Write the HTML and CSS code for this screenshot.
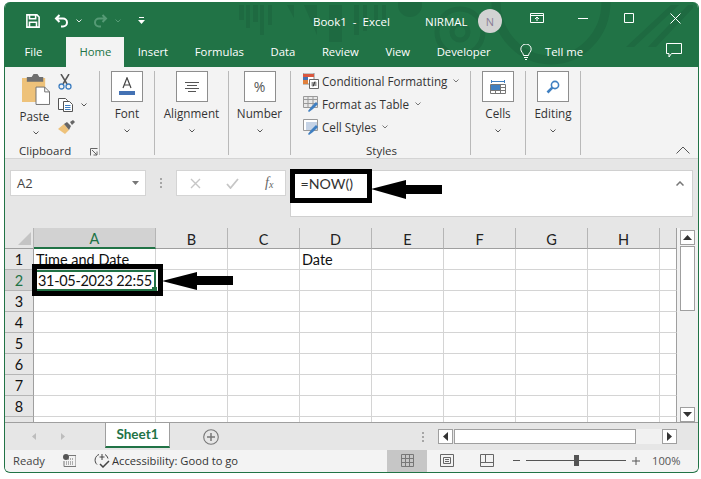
FILE: index.html
```html
<!DOCTYPE html>
<html lang="en">
<head>
<meta charset="utf-8">
<title>Book1 - Excel</title>
<link rel="stylesheet" href="styles.css">
</head>
<body>
<div class="window">
  <div class="head">
  <header class="titlebar">
    <svg class="pattern" width="460" height="65" viewBox="0 0 460 65" fill="#1e6a41">
      <path d="M6 3h5v15H6zM13 3h4v23h-4zM20 3h5v17h-5zM27 3h4v30h-4zM35 3h4v20h-4z"/>
      <path d="M54 3h7v13z"/>
      <path d="M71 3l13 30V3zM96 3h13v37H96zM121 3h5v30h-5zM130 3h4v26h-4z"/>
      <circle cx="177" cy="3" r="12"/>
      <path d="M141 3h4v20h-4zM149 3h4v14h-4z"/>
      <circle cx="227" cy="30" r="23" fill="none" stroke="#1e6a41" stroke-width="5"/>
      <circle cx="227" cy="30" r="8" fill="none" stroke="#1e6a41" stroke-width="5"/>
      <path d="M263 0a55 58 0 0 0 110 0" fill="none" stroke="#1e6a41" stroke-width="9"/>
      <path d="M393 45l45-42h8l-45 42zM415 45l40-42h5v3l-37 39z"/>
    </svg>
    <div class="qat">
      <svg class="ic-save" width="14" height="14" viewBox="0 0 16 16" fill="none" stroke="#fff" stroke-width="1.800"><path d="M1 1h11.500L15 3.500V15H1z"/><path d="M4 1v4.500h7V1M4 15V9.500h8V15" /></svg>
      <svg class="ic-undo" width="15" height="14" viewBox="0 0 15 14" fill="none" stroke="#fff" stroke-width="2"><path d="M5.500 1L2 4.500 5.500 8M2 4.500h7a4 4 0 0 1 0 8H7"/></svg>
      <svg class="chev" width="6" height="4" viewBox="0 0 6 4" fill="none" stroke="#dfe9e3"><path d="M.5.500L3 3 5.500.500"/></svg>
      <svg class="ic-redo" width="15" height="14" viewBox="0 0 15 14" fill="none" stroke="#559a75" stroke-width="2"><path d="M9.500 1L13 4.500 9.500 8M13 4.500H6a4 4 0 0 0 0 8h2"/></svg>
      <svg class="chev" width="6" height="4" viewBox="0 0 6 4" fill="none" stroke="#559a75"><path d="M.5.500L3 3 5.500.500"/></svg>
      <svg class="ic-cust" width="7" height="8" viewBox="0 0 7 8" fill="#fff"><path d="M1 0h5v1H1zM0 3h7L3.500 7z"/></svg>
    </div>
    <div class="doc">Book1&nbsp; -&nbsp; Excel</div>
    <div class="user">NIRMAL</div>
    <div class="avatar">N</div>
    <svg class="ic-display" width="14" height="10" viewBox="0 0 14 10" fill="none" stroke="#fff"><path d="M.5.500h13v9H.5zM.5 2.500h13M7 8V4M5 6l2-2 2 2"/></svg>
    <svg class="ic-min" width="10" height="1" viewBox="0 0 10 1" fill="#fff"><path d="M0 0h10v1H0z"/></svg>
    <svg class="ic-max" width="10" height="10" viewBox="0 0 10 10" fill="none" stroke="#fff"><path d="M.5.500h9v9h-9z"/></svg>
    <svg class="ic-close" width="11" height="11" viewBox="0 0 11 11" fill="none" stroke="#fff"><path d="M.5.500l10 10M10.500.500l-10 10"/></svg>
  </header>

  <nav class="tabs">
    <span class="tab tab-file">File</span>
    <span class="tab tab-active">Home</span>
    <span class="tab">Insert</span>
    <span class="tab">Formulas</span>
    <span class="tab">Data</span>
    <span class="tab">Review</span>
    <span class="tab">View</span>
    <span class="tab">Developer</span>
    <svg class="ic-bulb" width="12" height="16" viewBox="0 0 12 16" fill="none" stroke="#fff"><path d="M3.500 11.500C3.500 9 .8 8 .8 5.200a5.200 5.200 0 0 1 10.400 0C11.200 8 8.500 9 8.500 11.500zM4 13.500h4M5 15.500h2"/></svg>
    <span class="tab tab-tell">Tell me</span>
    <svg class="ic-comment" width="16" height="15" viewBox="0 0 16 15" fill="none" stroke="#fff"><path d="M.5.500h15v10H5.500L3 14v-3.500H.5z"/></svg>
  </nav>
  </div>

  <section class="ribbon">
    <div class="group g-clip">
      <div class="clip-top">
        <div class="paste">
          <svg width="28" height="31" viewBox="0 0 29 32"><path d="M0 4h24v25H0z" fill="#eec27a"/><path d="M5 3h5l2-3h4l2 3h4v5H5z" fill="#6f6f6f"/><path d="M14.500 13.500h9l5 5v13h-14z" fill="#fff" stroke="#6f6f6f"/><path d="M23.500 13.500v5h5" fill="none" stroke="#6f6f6f"/></svg>
          <span class="lbl">Paste</span>
          <svg class="chev-d" width="6" height="4" viewBox="0 0 6 4" fill="none" stroke="#555"><path d="M.5.500L3 3 5.500.500"/></svg>
        </div>
        <div class="clip-tools">
          <svg width="14" height="16" viewBox="0 0 14 16" fill="none"><path d="M3 0l6 10M11 0L5 10" stroke="#555" stroke-width="1.500"/><circle cx="3.500" cy="12.500" r="2.500" stroke="#3f7fc1" stroke-width="1.300"/><circle cx="10.500" cy="12.500" r="2.500" stroke="#3f7fc1" stroke-width="1.300"/></svg>
          <div class="copy-row">
            <svg width="15" height="14" viewBox="0 0 15 14" fill="none" stroke="#555"><path d="M.5.500h7l2 2v9h-9z" fill="#fff"/><path d="M5.500 3.500h6l3 3v7h-9z" fill="#fff"/><path d="M7 7.500h5.500M7 9.500h5.500M7 11.500h5.500" stroke="#3f7fc1"/></svg>
            <svg class="chev-s" width="6" height="4" viewBox="0 0 6 4" fill="none" stroke="#555"><path d="M.5.500L3 3 5.500.500"/></svg>
          </div>
          <svg width="17" height="14" viewBox="0 0 17 14"><path d="M0 9l6-5 5 6-4 4z" fill="#eec27a"/><path d="M6 4l3-2 4 4-2 4z" fill="#666"/><path d="M12 2l3-2 2 2-3 3z" fill="#666"/></svg>
        </div>
      </div>
      <div class="gname gname-clip"><span>Clipboard</span><svg width="8" height="8" viewBox="0 0 8 8" fill="none" stroke="#666"><path d="M.5 7.500V.5h7M2 2l5 5M7 3.500V7H3.500"/></svg></div>
    </div>

    <div class="group g-font big">
      <div class="box"><svg width="16" height="19" viewBox="0 0 16 19"><path d="M4 11L8 .8l4 10.200M5.300 8h5.400" fill="none" stroke="#444" stroke-width="1.200"/><path d="M0 14h16v4H0z" fill="#4472b4"/></svg></div>
      <span class="lbl">Font</span>
      <svg class="chev-d" width="6" height="4" viewBox="0 0 6 4" fill="none" stroke="#555"><path d="M.5.500L3 3 5.500.500"/></svg>
    </div>

    <div class="group g-align big">
      <div class="box"><svg width="14" height="10" viewBox="0 0 14 10" stroke="#555"><path d="M0 .5h14M2 3.500h10M0 6.500h14M3 9.500h8"/></svg></div>
      <span class="lbl">Alignment</span>
      <svg class="chev-d" width="6" height="4" viewBox="0 0 6 4" fill="none" stroke="#555"><path d="M.5.500L3 3 5.500.500"/></svg>
    </div>

    <div class="group g-num big">
      <div class="box box-pct">%</div>
      <span class="lbl">Number</span>
      <svg class="chev-d" width="6" height="4" viewBox="0 0 6 4" fill="none" stroke="#555"><path d="M.5.500L3 3 5.500.500"/></svg>
    </div>

    <div class="group g-styles">
      <div class="style-list">
        <div class="style-row">
          <svg width="16" height="16" viewBox="0 0 16 16"><path d="M0 0h11v11H0z" fill="#fff" stroke="#888"/><path d="M0 1h5v3H0z" fill="#d9573f"/><path d="M5 1h6v3H5z" fill="#d9573f"/><path d="M0 4h5v3H0z" fill="#4472b4"/><path d="M0 7h5v4H0z" fill="#e0803c"/><path d="M6.500 6.500h9v9h-9z" fill="#fff" stroke="#666"/><path d="M8.500 10h5M8.500 12h5M12 8.500l-2 5" stroke="#333" fill="none"/></svg>
          <span>Conditional Formatting</span><svg class="chev-s" width="6" height="4" viewBox="0 0 6 4" fill="none" stroke="#777"><path d="M.5.500L3 3 5.500.500"/></svg>
        </div>
        <div class="style-row">
          <svg width="16" height="16" viewBox="0 0 16 16"><path d="M.5.500h14v11H.5z" fill="#e8e8e8" stroke="#999"/><path d="M.5 3.500h14M5 .5v11M10 .5v11M.5 7.500h14" stroke="#999" fill="none"/><path d="M5 15l3-4 5-5 2 2-5 5-4 3z" fill="#3f7fc1"/></svg>
          <span>Format as Table</span><svg class="chev-s" width="6" height="4" viewBox="0 0 6 4" fill="none" stroke="#777"><path d="M.5.500L3 3 5.500.500"/></svg>
        </div>
        <div class="style-row">
          <svg width="16" height="16" viewBox="0 0 16 16"><path d="M.5.500h14v11H.5z" fill="#fff" stroke="#999"/><path d="M3 3h11v8H3z" fill="#c5d3e6"/><path d="M5 15l3-4 5-5 2 2-5 5-4 3z" fill="#3f7fc1"/></svg>
          <span>Cell Styles</span><svg class="chev-s" width="6" height="4" viewBox="0 0 6 4" fill="none" stroke="#777"><path d="M.5.500L3 3 5.500.500"/></svg>
        </div>
      </div>
      <div class="gname">Styles</div>
    </div>

    <div class="group g-cells big">
      <div class="box"><svg width="16" height="16" viewBox="0 0 16 16" fill="none"><path d="M1.500 1v3M14.500 1v3M2 2.500h12" stroke="#3f7fc1"/><path d="M.5 5.500h15v9H.5zM.5 8.500h15M.5 11.500h15M5.500 5.500v9M10.500 5.500v9" stroke="#777"/><path d="M1 6h9v5H1z" fill="#3f7fc1"/></svg></div>
      <span class="lbl">Cells</span>
      <svg class="chev-d" width="6" height="4" viewBox="0 0 6 4" fill="none" stroke="#555"><path d="M.5.500L3 3 5.500.500"/></svg>
    </div>

    <div class="group g-edit big">
      <div class="box"><svg width="14" height="14" viewBox="0 0 14 14" fill="none" stroke="#3f7fc1"><circle cx="9" cy="5" r="3.600" stroke-width="1.600"/><path d="M6.300 7.700L1.500 12.500" stroke-width="2.600"/></svg></div>
      <span class="lbl">Editing</span>
      <svg class="chev-d" width="6" height="4" viewBox="0 0 6 4" fill="none" stroke="#555"><path d="M.5.500L3 3 5.500.500"/></svg>
    </div>

    <svg class="ic-collapse" width="14" height="8" viewBox="0 0 14 8" fill="none" stroke="#555"><path d="M.5 7.500L7 1l6.500 6.500"/></svg>
  </section>

  <section class="fbar">
    <div class="namebox"><span>A2</span><svg width="7" height="4" viewBox="0 0 7 4" fill="#777"><path d="M0 0h7L3.500 4z"/></svg></div>
    <div class="dots"><i></i><i></i><i></i></div>
    <div class="fbtns">
      <svg width="11" height="11" viewBox="0 0 11 11" fill="none" stroke="#c6c6c6" stroke-width="1.400"><path d="M1 1l9 9M10 1l-9 9"/></svg>
      <svg width="13" height="11" viewBox="0 0 13 11" fill="none" stroke="#c6c6c6" stroke-width="1.800"><path d="M1 6l3.500 4L12 1"/></svg>
      <span class="fx">f<sub>x</sub></span>
    </div>
    <div class="finput">
      <span class="ftext">=NOW()</span>
      <svg width="8" height="5" viewBox="0 0 8 5" fill="none" stroke="#777" stroke-width="1.500"><path d="M.5 4.500L4 1l3.500 3.500"/></svg>
    </div>
  </section>

  <section class="main">
    <div class="sheet">
      <div class="corner"><svg width="13" height="13" viewBox="0 0 13 13" fill="#c4c4c4"><path d="M13 0v13H0z"/></svg></div>
      <div class="ch ch-sel">A</div><div class="ch">B</div><div class="ch">C</div><div class="ch">D</div><div class="ch">E</div><div class="ch">F</div><div class="ch">G</div><div class="ch">H</div><div class="ch"></div>

      <div class="rh">1</div><div class="c">Time and Date</div><div class="c"></div><div class="c"></div><div class="c">Date</div><div class="c"></div><div class="c"></div><div class="c"></div><div class="c"></div><div class="c"></div>
      <div class="rh rh-sel">2</div><div class="c c-active">31-05-2023 22:55</div><div class="c"></div><div class="c"></div><div class="c"></div><div class="c"></div><div class="c"></div><div class="c"></div><div class="c"></div><div class="c"></div>
      <div class="rh">3</div><div class="c"></div><div class="c"></div><div class="c"></div><div class="c"></div><div class="c"></div><div class="c"></div><div class="c"></div><div class="c"></div><div class="c"></div>
      <div class="rh">4</div><div class="c"></div><div class="c"></div><div class="c"></div><div class="c"></div><div class="c"></div><div class="c"></div><div class="c"></div><div class="c"></div><div class="c"></div>
      <div class="rh">5</div><div class="c"></div><div class="c"></div><div class="c"></div><div class="c"></div><div class="c"></div><div class="c"></div><div class="c"></div><div class="c"></div><div class="c"></div>
      <div class="rh">6</div><div class="c"></div><div class="c"></div><div class="c"></div><div class="c"></div><div class="c"></div><div class="c"></div><div class="c"></div><div class="c"></div><div class="c"></div>
      <div class="rh">7</div><div class="c"></div><div class="c"></div><div class="c"></div><div class="c"></div><div class="c"></div><div class="c"></div><div class="c"></div><div class="c"></div><div class="c"></div>
      <div class="rh">8</div><div class="c"></div><div class="c"></div><div class="c"></div><div class="c"></div><div class="c"></div><div class="c"></div><div class="c"></div><div class="c"></div><div class="c"></div>
      <div class="rh"></div><div class="c"></div><div class="c"></div><div class="c"></div><div class="c"></div><div class="c"></div><div class="c"></div><div class="c"></div><div class="c"></div><div class="c"></div>
    </div>
    <div class="vscroll">
      <div class="sb-btn"><svg width="9" height="5" viewBox="0 0 9 5" fill="#333"><path d="M4.500 0L9 5H0z"/></svg></div>
      <div class="vthumb"></div>
      <div class="sb-btn sb-down"><svg width="9" height="5" viewBox="0 0 9 5" fill="#333"><path d="M0 0h9L4.500 5z"/></svg></div>
    </div>
  </section>

  <section class="sheetbar">
    <svg class="nav-l" width="4" height="7" viewBox="0 0 4 7" fill="#bdbdbd"><path d="M4 0v7L0 3.500z"/></svg>
    <svg class="nav-r" width="4" height="7" viewBox="0 0 4 7" fill="#bdbdbd"><path d="M0 0v7l4-3.500z"/></svg>
    <div class="sheettab">Sheet1</div>
    <svg class="addsheet" width="16" height="16" viewBox="0 0 16 16" fill="none" stroke="#777"><circle cx="8" cy="8" r="7.300" stroke-width="1.100"/><path d="M8 4v8M4 8h8" stroke-width="1.500"/></svg>
    <div class="dots dots-h"><i></i><i></i><i></i></div>
    <div class="hscroll">
      <div class="sb-btn"><svg width="5" height="9" viewBox="0 0 5 9" fill="#333"><path d="M5 0v9L0 4.500z"/></svg></div>
      <div class="hthumb"></div>
      <div class="htrack"></div>
      <div class="sb-btn"><svg width="5" height="9" viewBox="0 0 5 9" fill="#333"><path d="M0 0v9l5-4.500z"/></svg></div>
    </div>
  </section>

  <footer class="status">
    <span class="ready">Ready</span>
    <svg class="ic-macro" width="13" height="13" viewBox="0 0 13 13"><circle cx="3" cy="3" r="3" fill="#555"/><path d="M5 1.500h8v11H1V7" fill="none" stroke="#777"/><path d="M3 8h8M3 10h8M5 5h6" stroke="#666" stroke-dasharray="1 1"/></svg>
    <svg class="ic-acc" width="16" height="15" viewBox="0 0 16 15" fill="none" stroke="#444"><path d="M5 1.500a6 6 0 0 0-2 10M11 1.500a6 6 0 0 1 3 4M8 1v6M5.500 4h5"/><path d="M6 11l3 3 6-6" stroke-width="1.500"/></svg>
    <span class="acc">Accessibility: Good to go</span>
    <div class="view view-on"><svg width="13" height="13" viewBox="0 0 13 13" fill="none" stroke="#777"><path d="M.5.500h12v12H.5zM.5 4.500h12M.5 8.500h12M4.500.5v12M8.500.5v12"/></svg></div>
    <div class="view"><svg width="14" height="13" viewBox="0 0 14 13" fill="none" stroke="#666"><path d="M.5.500h13v12H.5zM3.500 3.500h7v6h-7zM5 5.500h4M5 7.500h4"/></svg></div>
    <div class="view"><svg width="14" height="13" viewBox="0 0 14 13" fill="none" stroke="#666"><path d="M.5.500h13v12H.5zM.5 8.500h13M5.500.5v8"/></svg></div>
    <div class="zoom">
      <svg width="7" height="1" viewBox="0 0 7 1" fill="#555"><path d="M0 0h7v1H0z"/></svg>
      <div class="slider"><div class="knob"></div></div>
      <svg width="8" height="8" viewBox="0 0 8 8" fill="#555"><path d="M0 3.500h8v1H0zM3.500 0h1v8h-1z"/></svg>
      <span class="pct">100%</span>
    </div>
  </footer>
</div>

<div class="mark mark-formula"></div>
<div class="mark mark-cell"></div>
<svg class="arrow arrow-formula" width="71" height="19" viewBox="0 0 71 19" fill="#000"><path d="M0 9l35-9v5h36v9H35v5z"/></svg>
<svg class="arrow arrow-cell" width="71" height="18" viewBox="0 0 71 18" fill="#000"><path d="M0 9l35-9v4h36v9H35v5z"/></svg>
</body>
</html>
```

FILE: styles.css
```css
* { box-sizing: border-box; }
html, body { margin: 0; padding: 0; background: #fff; }
body { width: 701px; height: 479px; position: relative; overflow: hidden; font-family: "Open Sans", "Noto Sans", sans-serif; font-size: 11.700px; color: #333; }
svg { display: block; flex: none; }

.window { margin: 2px 0 0 4px; width: 695px; height: 471px; border: 1.500px solid #217346; border-top: 0; border-radius: 6px; overflow: hidden; display: flex; flex-direction: column; background: #f3f3f3; }

.head { background: #217346; flex: none; }
.titlebar { height: 35px; display: flex; align-items: center; position: relative; color: #fff; }
.pattern { position: absolute; left: 228px; top: 0; }
.qat { display: flex; align-items: center; margin-left: 21px; margin-top: 2px; position: relative; }
.ic-undo { margin-left: 14px; }
.qat .chev { margin-left: 7px; }
.ic-redo { margin-left: 11px; }
.ic-cust { margin-left: 17px; }
.doc { position: relative; margin-left: 168px; width: 112px; font-size: 11.500px; margin-top: 3px; white-space: nowrap; }
.user { position: relative; width: 53px; font-size: 11.500px; margin-top: 3px; }
.avatar { position: relative; width: 24px; height: 24px; border-radius: 50%; background: #d2d2d2; color: #8a7d96; display: flex; align-items: center; justify-content: center; font-size: 11px; margin-top: 3px; }
.ic-display { position: relative; margin-left: 28px; margin-top: -3px; }
.ic-min { position: relative; margin-left: 34px; margin-top: -3px; }
.ic-max { position: relative; margin-left: 36px; margin-top: -3px; }
.ic-close { position: relative; margin-left: 36px; margin-top: -3px; }

.tabs { height: 30px; display: flex; align-items: stretch; color: #fff; position: relative; font-size: 11.300px; }
.tab { padding: 0 13.300px 2px; display: flex; align-items: center; white-space: nowrap; }
.tab-file { margin-left: 6px; padding-left: 13.500px; padding-right: 24px; }
.tab-active { background: #f3f3f3; color: #217346; padding: 0 0 2px; width: 58px; justify-content: center; }
.ic-bulb { margin: 7px 0 0 16px; }
.tab-tell { padding-left: 13px; }
.ic-comment { margin: 6px 0 0 70px; }

.ribbon { height: 92px; background: #f3f3f3; border-bottom: 1px solid #d4d4d4; display: flex; flex: none; position: relative; padding-top: 4px; }
.group { border-right: 1px solid #b9b9b9; height: 84px; display: flex; flex-direction: column; align-items: center; }
.big .box { width: 32px; height: 31px; border: 1px solid #8e8e8e; background: #fff; display: flex; align-items: center; justify-content: center; }
.big .lbl { margin-top: 3px; line-height: 17px; }
.big .chev-d { margin-top: 7px; }
.g-clip { width: 95px; padding-left: 10px; align-items: flex-start; }
.g-font { width: 55px; }
.g-align { width: 74px; }
.g-num { width: 62px; }
.g-styles { width: 180px; align-items: flex-start; padding-left: 12px; }
.g-cells { width: 55px; }
.g-edit { width: 55px; }
.clip-top { display: flex; height: 72px; flex: none; }
.paste { width: 38px; display: flex; flex-direction: column; align-items: flex-start; padding: 3px 0 0 6.500px; }
.paste .lbl { line-height: 17px; margin: 3px 0 0 -2px; }
.paste .chev-d { margin: 6px 0 0 11px; }
.clip-tools { display: flex; flex-direction: column; gap: 8px; margin-left: 5px; padding-top: 3px; }
.copy-row { display: flex; align-items: center; gap: 8px; }
.gname { line-height: 14px; width: 100%; flex: none; }
.gname-clip { display: flex; align-items: center; gap: 19px; margin-top: 1px; white-space: nowrap; margin-left: 4px; font-size: 11.500px; }
.gname-clip svg { margin-top: 2px; }
.style-list { display: flex; flex-direction: column; gap: 7px; height: 72px; flex: none; padding-top: 2px; }
.style-row { display: flex; align-items: center; height: 16px; gap: 3px; white-space: nowrap; }
.style-row .chev-s { margin-left: 3px; }
.g-styles .gname { text-align: center; margin-top: 1px; padding-right: 10px; font-size: 11.500px; }
.box-pct { font-size: 14px; color: #555; }
.ic-collapse { position: absolute; left: 671px; top: 79px; }

.fbar { height: 69px; background: #e6e6e6; display: flex; flex: none; align-items: flex-start; padding: 11px 0 0 5px; }
.namebox { width: 136px; height: 26px; background: #fff; border: 1px solid #d4d4d4; display: flex; align-items: center; justify-content: space-between; padding: 0 6px; font-size: 13px; color: #444; }
.dots { display: flex; flex-direction: column; gap: 2px; margin: 8px 0 0 14px; width: 16px; }
.dots i { width: 2px; height: 2px; background: #a6a6a6; }
.fbtns { width: 110px; height: 26px; background: #fff; border: 1px solid #d4d4d4; display: flex; align-items: center; padding-left: 13px; gap: 25px; }
.fx { font-family: "Liberation Serif", serif; font-style: italic; font-size: 14px; color: #666; margin-left: 1px; }
.fx sub { font-size: 10px; vertical-align: -1px; }
.finput { margin-left: 3.500px; width: 403px; height: 47px; background: #fff; border: 1px solid #d0d0d0; display: flex; justify-content: space-between; padding: 0 8px 0 10px; font-family: Lato, sans-serif; font-size: 14.200px; color: #333; line-height: 25px; }
.finput svg { margin-top: 10px; }

.main { height: 194px; display: flex; flex: none; background: #f1f1f1; position: relative; }
.sheet { width: 672px; display: grid; grid-template-columns: 29px 122px repeat(7, 72px) 17px; grid-template-rows: 21px repeat(8, 21px) 1fr; background: #fff; font-family: Lato, sans-serif; font-size: 14.500px; color: #111; }
.corner { background: #e6e6e6; border-right: 1px solid #b5b5b5; border-bottom: 1px solid #9f9f9f; display: flex; align-items: flex-end; justify-content: flex-end; padding: 0 2px 3px 0; }
.ch { background: #e6e6e6; border-right: 1px solid #b5b5b5; border-bottom: 1px solid #9f9f9f; display: flex; align-items: center; justify-content: center; color: #222; padding-top: 2px; }
.ch-sel { background: #d2d2d2; color: #217346; border-bottom: 2px solid #217346; }
.rh { background: #e6e6e6; border-right: 1px solid #9f9f9f; border-bottom: 1px solid #b5b5b5; display: flex; align-items: center; justify-content: center; }
.rh-sel { background: #d2d2d2; color: #217346; }
.c { border-right: 1px solid #d4d4d4; border-bottom: 1px solid #d4d4d4; padding: 2px 2px 0; white-space: nowrap; line-height: 18px; overflow: hidden; }
.c-active { outline: 2px solid #217346; outline-offset: -2px; position: relative; overflow: visible; padding-left: 4px; letter-spacing: -0.320px; }
.c-active::after { content: ""; position: absolute; right: -2px; bottom: -2px; width: 5px; height: 5px; background: #217346; }
.sheet > :nth-last-child(-n+10) { border-bottom: 0; }
.sheet > :nth-child(10n) { border-right: 1px solid #9f9f9f; }

.vscroll { width: 20px; margin-left: 3px; padding-top: 2px; display: flex; flex-direction: column; background: linear-gradient(#e6e6e6 2px, #f1f1f1 2px); }
.sb-btn { width: 15px; height: 15px; background: #fff; border: 1px solid #9f9f9f; display: flex; align-items: center; justify-content: center; flex: none; }
.vthumb { width: 15px; height: 65px; background: #fff; border: 1px solid #9f9f9f; margin-top: 1px; }
.sb-down { margin-top: auto; }

.sheetbar { height: 28px; background: #e6e6e6; border-top: 1px solid #9f9f9f; display: flex; align-items: center; flex: none; position: relative; }
.nav-l { margin-left: 27px; margin-top: -1px; }
.nav-r { margin-left: 25px; margin-top: -1px; }
.sheettab { width: 65px; height: 25px; margin: -4px 0 0 40px; background: #fff; color: #217346; font-family: Lato, sans-serif; font-weight: 700; font-size: 13.500px; text-align: center; line-height: 22px; border-bottom: 2px solid #217346; border-left: 1px solid #9f9f9f; border-right: 1px solid #9f9f9f; position: relative; top: 1px; }
.addsheet { margin-left: 33px; }
.dots-h { margin: 0 0 0 202.500px; width: 16px; }
.hscroll { display: flex; height: 15px; }
.hthumb { width: 182px; background: #fff; border: 1px solid #9f9f9f; margin-left: 1px; }
.htrack { width: 26px; background: #f1f1f1; }

.status { height: 21px; background: #f3f3f3; display: flex; align-items: center; flex: none; font-size: 11.200px; color: #444; }
.ready { margin-left: 8px; width: 50px; }
.ic-acc { margin-left: 18px; }
.acc { margin-left: 2px; width: 275px; white-space: nowrap; color: #333; }
.view { width: 40px; height: 22px; display: flex; align-items: center; justify-content: center; }
.view-on { background: #c6c6c6; }
.zoom { display: flex; align-items: center; margin-left: 6px; }
.slider { width: 100px; height: 1px; background: #555; margin: 0 6px; position: relative; }
.knob { position: absolute; left: 48px; top: -5px; width: 5px; height: 11px; background: #555; }
.pct { margin-left: 12px; color: #555; }

.mark { position: absolute; border: 5px solid #000; }
.mark-formula { left: 290px; top: 169px; width: 82px; height: 34px; }
.mark-cell { left: 32px; top: 264px; width: 131px; height: 32px; }
.arrow { position: absolute; }
.arrow-formula { left: 371px; top: 180px; }
.arrow-cell { left: 162px; top: 272px; }
```
